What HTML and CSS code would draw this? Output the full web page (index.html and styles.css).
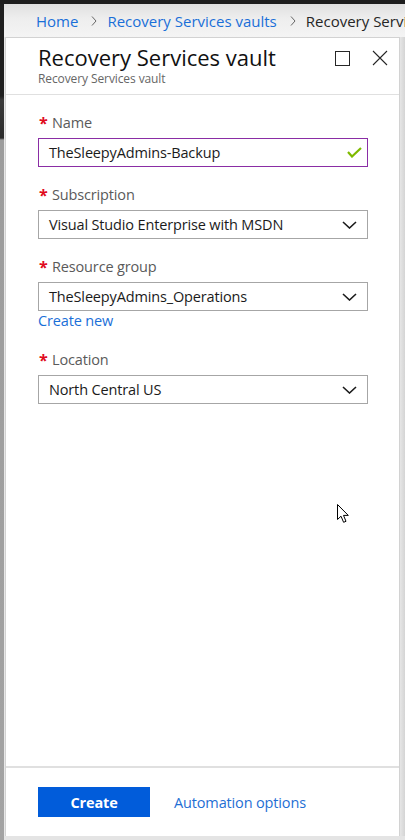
FILE: index.html
```html
<!DOCTYPE html>
<html lang="en">
<head>
<meta charset="utf-8">
<title>Recovery Services vault</title>
<link rel="stylesheet" href="styles.css">
</head>
<body>
<div class="screen">
  <div class="topbar"></div>
  <div class="row">
    <div class="leftstrip"></div>
    <div class="main">
      <nav class="crumbs">
        <a class="crumb-link">Home</a>
        <svg class="crumb-sep" width="6" height="10" viewBox="0 0 6 10"><polyline points="1,0.5 5,5 1,9.5" fill="none" stroke="#666" stroke-width="1"/></svg>
        <a class="crumb-link">Recovery Services vaults</a>
        <svg class="crumb-sep" width="6" height="10" viewBox="0 0 6 10"><polyline points="1,0.5 5,5 1,9.5" fill="none" stroke="#666" stroke-width="1"/></svg>
        <span class="crumb-current">Recovery Services vault</span>
      </nav>
      <div class="stage">
        <section class="blade">
          <header class="blade-head">
            <div class="titles">
              <h1 class="title">Recovery Services vault</h1>
              <div class="subtitle">Recovery Services vault</div>
            </div>
            <div class="head-icons">
              <svg width="15" height="15" viewBox="0 0 15 15"><rect x="0.5" y="0.5" width="14" height="14" fill="none" stroke="#262626" stroke-width="1"/></svg>
              <svg width="16" height="16" viewBox="0 0 16 16"><path d="M1 1 L15 15 M15 1 L1 15" fill="none" stroke="#262626" stroke-width="1.1"/></svg>
            </div>
          </header>
          <div class="blade-body">
            <div class="field">
              <div class="label"><span class="req">*</span>Name</div>
              <div class="input valid">
                <span class="value">TheSleepyAdmins-Backup</span>
                <svg width="15" height="11" viewBox="0 0 15 11"><polyline points="1,5 5,9.5 14,1" fill="none" stroke="#7fba00" stroke-width="2.2"/></svg>
              </div>
            </div>
            <div class="field">
              <div class="label"><span class="req">*</span>Subscription</div>
              <div class="input">
                <span class="value">Visual Studio Enterprise with MSDN</span>
                <svg width="15" height="8" viewBox="0 0 15 8"><polyline points="1,1 7.5,7 14,1" fill="none" stroke="#1b1b1b" stroke-width="1.6"/></svg>
              </div>
            </div>
            <div class="field">
              <div class="label"><span class="req">*</span>Resource group</div>
              <div class="input">
                <span class="value">TheSleepyAdmins_Operations</span>
                <svg width="15" height="8" viewBox="0 0 15 8"><polyline points="1,1 7.5,7 14,1" fill="none" stroke="#1b1b1b" stroke-width="1.6"/></svg>
              </div>
              <a class="create-new">Create new</a>
            </div>
            <div class="field">
              <div class="label"><span class="req">*</span>Location</div>
              <div class="input">
                <span class="value">North Central US</span>
                <svg width="15" height="8" viewBox="0 0 15 8"><polyline points="1,1 7.5,7 14,1" fill="none" stroke="#1b1b1b" stroke-width="1.6"/></svg>
              </div>
            </div>
          </div>
          <footer class="blade-foot">
            <button class="btn-primary">Create</button>
            <a class="foot-link">Automation options</a>
          </footer>
        </section>
        <div class="rightstrip"></div>
      </div>
      <div class="bottomstrip"></div>
    </div>
  </div>
  <svg class="cursor" width="13" height="20" viewBox="0 0 13 20"><path d="M0.5 0.5 L0.5 15.5 L4 12.2 L6.6 18.3 L9 17.3 L6.5 11.4 L11.3 11.4 Z" fill="#fff" stroke="#000" stroke-width="1" stroke-linejoin="miter"/></svg>
</div>
</body>
</html>
```

FILE: styles.css
```css
* { box-sizing: border-box; }
html, body { margin: 0; padding: 0; }
body {
  font-family: "Open Sans", "Noto Sans", "DejaVu Sans", sans-serif;
  background: #e6e6e6;
}
.screen {
  position: relative;
  width: 405px;
  height: 840px;
  display: flex;
  flex-direction: column;
  overflow: hidden;
}
.topbar { height: 4px; background: #1e1e1e; flex: none; }
.row { flex: 1; display: flex; min-height: 0; }
.leftstrip {
  width: 4px;
  flex: none;
  background: linear-gradient(to bottom, #1f1f1f 0, #1f1f1f 92px, #3a3a3a 96px, #2b2b2b 134px, #9c9c9c 136px, #a3a3a3 100%);
}
.main { flex: 1; display: flex; flex-direction: column; min-width: 0; background: #e8e8e8; }
.crumbs {
  height: 33px;
  flex: none;
  display: flex;
  align-items: center;
  padding: 0 0 0 32px;
  white-space: nowrap;
  overflow: hidden;
  background: linear-gradient(to bottom, #e0e0e0 0, #eeeeee 45%, #f4f4f4 100%);
  font-size: 15px;
  line-height: 20px;
}
.crumb-link { color: #1a6fd8; text-decoration: none; }
.crumb-sep { flex: none; margin: 1px 10px 0 13px; }
.crumb-current { color: #262626; }
.stage { flex: 1; display: flex; min-height: 0; padding-left: 1px; }
.blade {
  flex: 1;
  display: flex;
  flex-direction: column;
  background: #fff;
  border: 1px solid #d2d2d2;
  border-bottom: none;
  min-width: 0;
}
.rightstrip { width: 5px; flex: none; background: linear-gradient(to right, #e6e6e6, #d4d4d4); }
.bottomstrip { height: 4px; flex: none; background: #e4e4e4; }
.blade-head {
  display: flex;
  justify-content: space-between;
  align-items: flex-start;
  padding: 5px 11px 7px 32px;
  border-bottom: 1px solid #e0e0e0;
}
.title {
  margin: 0;
  font-size: 22px;
  font-weight: 400;
  line-height: 28px;
  color: #111;
}
.subtitle {
  font-size: 12px;
  line-height: 16px;
  color: #666;
  letter-spacing: -0.1px;
}
.head-icons { display: flex; align-items: center; gap: 22px; margin-top: 7px; }
.blade-body {
  flex: 1;
  padding: 18px 31px 0 32px;
  display: flex;
  flex-direction: column;
  gap: 18px;
}
.field { display: flex; flex-direction: column; }
.label {
  font-size: 14.5px;
  line-height: 20px;
  color: #5a5a5a;
  letter-spacing: -0.15px;
  margin-bottom: 5px;
  display: flex;
}
.req {
  width: 14px;
  flex: none;
  color: #e00b1c;
  font-weight: 700;
  font-size: 16px;
  line-height: 20px;
  padding-left: 1px;
}
.input {
  height: 29px;
  border: 1px solid #a6a6a6;
  display: flex;
  align-items: center;
  justify-content: space-between;
  padding: 0 10px 0 10px;
  font-size: 14.5px;
  letter-spacing: -0.15px;
  color: #1b1b1b;
}
.input.valid { border-color: #8a2da5; padding-right: 5px; }
.create-new {
  color: #1a6fd8;
  font-size: 14.5px;
  letter-spacing: -0.15px;
  line-height: 20px;
  text-decoration: none;
  margin-bottom: 1px;
}
.blade-foot {
  flex: none;
  border-top: 2px solid #e0e0e0;
  padding: 19px 0 19px 32px;
  display: flex;
  align-items: center;
}
.btn-primary {
  width: 112px;
  height: 30px;
  border: none;
  background: #015cda;
  color: #fff;
  font-family: inherit;
  font-weight: 700;
  font-size: 14.5px;
  letter-spacing: -0.15px;
  padding: 0;
}
.foot-link {
  margin-left: 24px;
  color: #1f6fd4;
  font-size: 14.5px;
  letter-spacing: -0.15px;
  text-decoration: none;
}
.cursor { position: absolute; left: 337px; top: 504px; }
```
